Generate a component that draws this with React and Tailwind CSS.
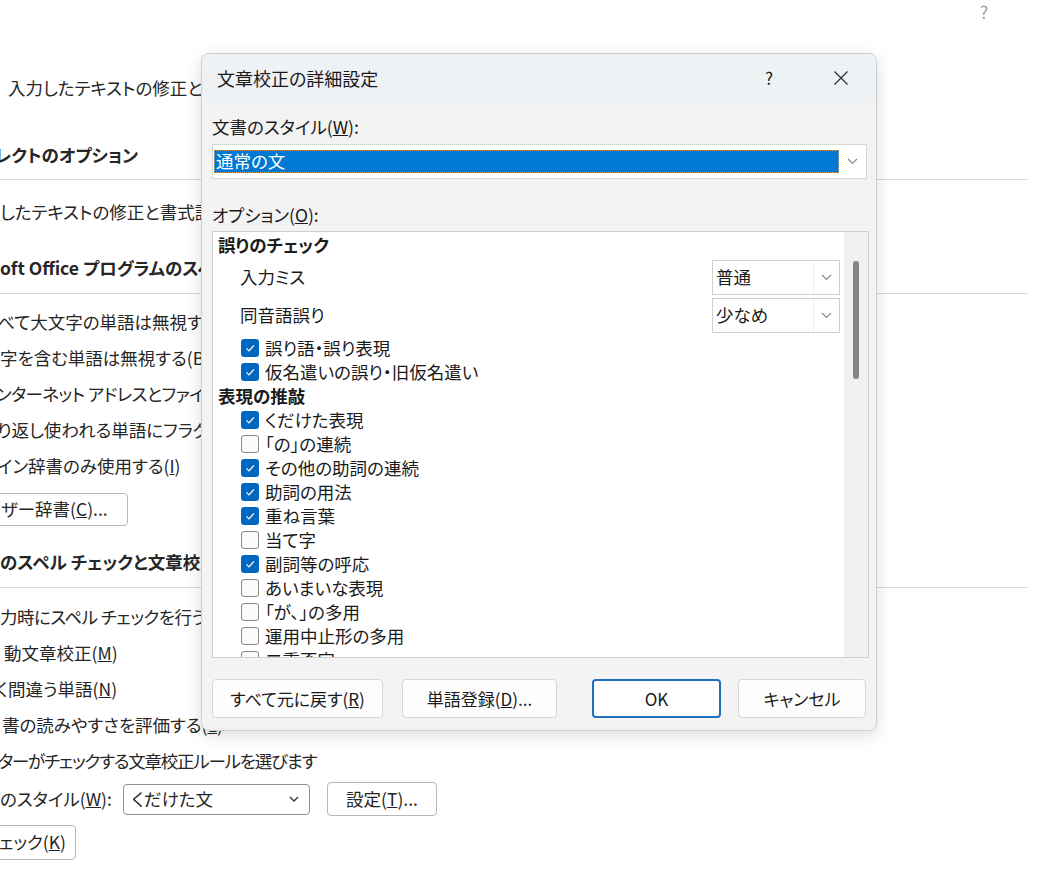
const font = {
  fontFamily: '"Noto Sans CJK JP", "Noto Sans", "Liberation Sans", sans-serif',
};

function Chevron({ className = '' }) {
  return (
    <svg width="11" height="7" viewBox="0 0 11 7" className={className}>
      <polyline points="1,1 5.5,5.5 10,1" fill="none" stroke="#8a8a8a" strokeWidth="1.2" />
    </svg>
  );
}

function Check({ checked }) {
  if (checked) {
    return (
      <span className="w-[18px] h-[18px] rounded-[3px] bg-[#0067c0] flex items-center justify-center flex-shrink-0">
        <svg width="12" height="12" viewBox="0 0 12 12">
          <polyline points="2.5,6.3 5,8.8 9.8,3.5" fill="none" stroke="#ffffff" strokeWidth="1.2" />
        </svg>
      </span>
    );
  }
  return <span className="w-[18px] h-[18px] rounded-[3px] border border-[#8a8a8a] bg-[#fbfbfb] flex-shrink-0" />;
}

function Row({ children, className = '' }) {
  return <div className={`h-[36px] flex items-center whitespace-nowrap ${className}`}>{children}</div>;
}

function Line() {
  return <div className="h-px w-[1028px] bg-[#d9d9d9]" />;
}

const items = [
  ['くだけた表現', true],
  ['「の」の連続', false],
  ['その他の助詞の連続', true],
  ['助詞の用法', true],
  ['重ね言葉', true],
  ['当て字', false],
  ['副詞等の呼応', true],
  ['あいまいな表現', false],
  ['「が、」の多用', false],
  ['運用中止形の多用', false],
  ['二重否定', false],
];

function Combo({ value }) {
  return (
    <div className="w-[128px] h-[35px] border border-[#cfcfcf] bg-white flex">
      <div className="flex-1 flex items-center pl-[3px]">{value}</div>
      <div className="w-[26px] border-l border-[#f0f0f0] flex items-center justify-center">
        <Chevron />
      </div>
    </div>
  );
}

function DialogButton({ children, primary, className = '' }) {
  return (
    <button
      type="button"
      className={`h-[39px] rounded-[4px] text-[17px] text-[#1a1a1a] flex items-center justify-center ${
        primary ? 'border-2 border-[#1f6fc0] bg-white' : 'border border-[#d6d6d6] bg-[#fdfdfd]'
      } ${className}`}
    >
      {children}
    </button>
  );
}

function Dialog() {
  return (
    <div className="absolute left-[201px] top-[53px] w-[676px] h-[678px] rounded-[8px] border border-[#cfcfcf] bg-[#f3f3f3] overflow-hidden shadow-[0_4px_16px_rgba(0,0,0,0.14)] text-[#1a1a1a]">
      {/* title bar */}
      <div className="h-[48px] bg-[#eef2f5] flex items-center pl-[15px] relative">
        <span className="text-[18px]">文章校正の詳細設定</span>
        <span className="absolute left-[563px] top-[11px] text-[17px]">?</span>
        <svg className="absolute left-[631px] top-[16px]" width="16" height="16" viewBox="0 0 16 16">
          <line x1="1.5" y1="1.5" x2="14.5" y2="14.5" stroke="#333" strokeWidth="1.3" />
          <line x1="14.5" y1="1.5" x2="1.5" y2="14.5" stroke="#333" strokeWidth="1.3" />
        </svg>
      </div>

      <div className="px-[10px] text-[17.5px]">
        <div className="mt-[13px] h-[24px] flex items-center">
          文書のスタイル(<u>W</u>):
        </div>
        <div className="mt-[5px] h-[35px] w-[655px] border border-[#d6d6d6] bg-white flex items-center">
          <div className="ml-px w-[625px] h-[23px] bg-[#0078d4] border border-dotted border-[#d9a45a] flex items-center pl-[1px] text-white">
            通常の文
          </div>
          <div className="flex-1 flex items-center justify-center">
            <Chevron />
          </div>
        </div>

        <div className="mt-[24px] h-[24px] flex items-center">
          オプション(<u>O</u>):
        </div>

        {/* options list */}
        <div className="mt-[4px] h-[427px] w-[657px] border border-[#cfcfcf] bg-white flex overflow-hidden">
          <div className="flex-1 pt-[1px]">
            <div className="h-[24px] flex items-center pl-[5px] font-bold">誤りのチェック</div>
            <div className="mt-[3px] h-[35px] flex items-center pl-[27px] pr-[4px] justify-between">
              <span>入力ミス</span>
              <Combo value="普通" />
            </div>
            <div className="mt-[3px] h-[35px] flex items-center pl-[27px] pr-[4px] justify-between">
              <span>同音語誤り</span>
              <Combo value="少なめ" />
            </div>
            <div className="mt-[3px]">
              {[['誤り語・誤り表現', true], ['仮名遣いの誤り・旧仮名遣い', true]].map(([t, c]) => (
                <div key={t} className="h-[24px] flex items-center pl-[28px] gap-[6px]">
                  <Check checked={c} />
                  <span>{t}</span>
                </div>
              ))}
            </div>
            <div className="h-[24px] flex items-center pl-[5px] font-bold">表現の推敲</div>
            {items.map(([t, c]) => (
              <div key={t} className="h-[24px] flex items-center pl-[28px] gap-[6px]">
                <Check checked={c} />
                <span>{t}</span>
              </div>
            ))}
          </div>
          <div className="w-[24px] bg-[#f0f0f0] flex justify-center pt-[29px]">
            <div className="w-[6px] h-[118px] rounded-full bg-[#858585]" />
          </div>
        </div>

        <div className="mt-[21px] flex">
          <DialogButton className="w-[171px]">すべて元に戻す(<u>R</u>)</DialogButton>
          <DialogButton className="w-[155px] ml-[19px]">単語登録(<u>D</u>)...</DialogButton>
          <DialogButton primary className="w-[129px] ml-[35px]">OK</DialogButton>
          <DialogButton className="w-[128px] ml-[17px]">キャンセル</DialogButton>
        </div>
      </div>
    </div>
  );
}

export default function App() {
  return (
    <div
      className="relative w-[1038px] h-[879px] bg-white overflow-hidden text-[17.5px] text-[#262626] [font-feature-settings:'palt']"
      style={font}
    >
      <span className="absolute left-[980px] top-[-1px] text-[17px] text-[#9a9a9a]">?</span>

      <div className="pt-[70px]">
        <Row className="pl-[8px]">入力したテキストの修正と書式設定に関するオプションを変更します。</Row>
        <div className="h-[31px]" />
        <Row className="font-bold -ml-[5px]">レクトのオプション</Row>
        <div className="h-[6px]" />
        <Line />
        <div className="h-[14px]" />
        <Row>したテキストの修正と書式設定を変更します:</Row>
        <div className="h-[20px]" />
        <Row className="font-bold">oft Office プログラムのスペル チェック</Row>
        <div className="h-[7px]" />
        <Line />
        <div className="h-[10px]" />
        <Row className="-ml-[3px]">べて大文字の単語は無視する(U)</Row>
        <Row>字を含む単語は無視する(B)</Row>
        <Row className="-ml-[4px] tracking-[-0.6px]">ンターネット アドレスとファイル パスは無視する(F)</Row>
        <Row className="-ml-[3px]">り返し使われる単語にフラグを付ける(R)</Row>
        <Row className="-ml-[3px]">イン辞書のみ使用する(<u>I</u>)</Row>
        <div className="h-[9px]" />
        <div className="h-[33px] flex">
          <button type="button" className="-ml-[12px] pl-[12px] w-[140px] border border-[#b8b8b8] rounded-[4px] bg-white flex items-center whitespace-nowrap">
            ザー辞書(<u>C</u>)...
          </button>
        </div>
        <div className="h-[18px]" />
        <Row className="font-bold">のスペル チェックと文章校正</Row>
        <div className="h-[7px]" />
        <Line />
        <div className="h-[11px]" />
        <Row className="tracking-[-0.5px]">力時にスペル チェックを行う(P)</Row>
        <Row className="pl-[4px]">動文章校正(<u>M</u>)</Row>
        <Row className="-ml-[4px]">く間違う単語(<u>N</u>)</Row>
        <Row className="pl-[2px]">書の読みやすさを評価する(<u>L</u>)</Row>
        <Row className="-ml-[2px] tracking-[-1.2px]">ターがチェックする文章校正ルールを選びます</Row>
        <div className="h-[2px]" />
        <Row>
          <span className="w-[123px] flex-shrink-0">のスタイル(<u>W</u>):</span>
          <div className="w-[187px] h-[31px] border border-[#8f8f8f] rounded-[4px] bg-white flex items-center justify-between pl-[8px] pr-[10px]">
            <span>くだけた文</span>
            <svg width="10" height="6" viewBox="0 0 10 6">
              <polyline points="1,1 5,5 9,1" fill="none" stroke="#333" strokeWidth="1.4" />
            </svg>
          </div>
          <button type="button" className="ml-[17px] w-[110px] h-[34px] border border-[#b8b8b8] rounded-[4px] bg-white flex items-center justify-center">
            設定(<u>T</u>)...
          </button>
        </Row>
        <div className="h-[8px]" />
        <div className="h-[35px] flex">
          <button type="button" className="-ml-[12px] pl-[10px] w-[88px] border border-[#b8b8b8] rounded-[4px] bg-white flex items-center whitespace-nowrap">
            ェック(<u>K</u>)
          </button>
        </div>
      </div>

      <Dialog />
    </div>
  );
}
